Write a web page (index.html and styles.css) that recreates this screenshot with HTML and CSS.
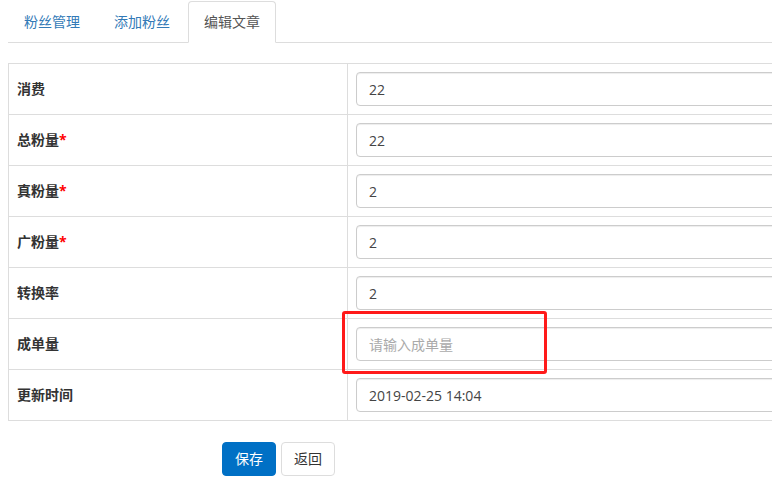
FILE: index.html
```html
<!DOCTYPE html>
<html lang="zh-CN">
<head>
<meta charset="utf-8">
<title>编辑文章</title>
<link rel="stylesheet" href="styles.css">
</head>
<body>
<div class="page">
  <ul class="tabs">
    <li class="tab"><a href="#">粉丝管理</a></li>
    <li class="tab"><a href="#">添加粉丝</a></li>
    <li class="tab active"><a href="#">编辑文章</a></li>
  </ul>
  <form class="form">
    <table class="grid">
      <colgroup><col class="col-label"><col class="col-field"></colgroup>
      <tbody>
        <tr><th>消费</th><td><input class="field" value="22"></td></tr>
        <tr><th>总粉量<span class="req">*</span></th><td><input class="field" value="22"></td></tr>
        <tr><th>真粉量<span class="req">*</span></th><td><input class="field" value="2"></td></tr>
        <tr><th>广粉量<span class="req">*</span></th><td><input class="field" value="2"></td></tr>
        <tr><th>转换率</th><td><input class="field" value="2"></td></tr>
        <tr><th>成单量</th><td><input class="field" placeholder="请输入成单量"></td></tr>
        <tr><th>更新时间</th><td><input class="field" value="2019-02-25 14:04"></td></tr>
      </tbody>
    </table>
    <div class="actions">
      <button type="button" class="btn btn-primary">保存</button>
      <button type="button" class="btn btn-default">返回</button>
    </div>
  </form>
  <div class="highlight"></div>
</div>
</body>
</html>
```

FILE: styles.css
```css
html, body {
  margin: 0;
  padding: 0;
  overflow: hidden;
  background: #fff;
}
body {
  font-family: "Open Sans", "Noto Sans CJK SC", "Microsoft YaHei", sans-serif;
  font-size: 14px;
  line-height: 20px;
  color: #333;
}
.page {
  position: relative;
  padding: 1px 0 0 8px;
  width: 1200px;
}
.tabs {
  list-style: none;
  margin: 0;
  padding: 0;
  display: flex;
  gap: 2px;
  border-bottom: 1px solid #ddd;
}
.tab {
  margin-bottom: -1px;
}
.tab a {
  display: block;
  padding: 10px 15px;
  line-height: 20px;
  border: 1px solid transparent;
  border-radius: 4px 4px 0 0;
  color: #337ab7;
  text-decoration: none;
}
.tab.active a {
  color: #555;
  background: #fff;
  border-color: #ddd #ddd transparent;
}
.form {
  margin-top: 20px;
}
.grid {
  border-collapse: collapse;
  table-layout: fixed;
  width: 1100px;
  border: 1px solid #ddd;
}
.col-label { width: 339px; }
.grid th, .grid td {
  border: 1px solid #ddd;
  padding: 8px;
  vertical-align: middle;
  text-align: left;
}
.grid th {
  font-weight: bold;
  color: #333;
}
.req {
  color: #f00;
}
.field {
  display: block;
  box-sizing: border-box;
  width: 100%;
  height: 34px;
  padding: 6px 12px;
  font-family: inherit;
  font-size: 14px;
  line-height: 20px;
  color: #444;
  background: #fff;
  border: 1px solid #ccc;
  border-radius: 4px;
  box-shadow: inset 0 1px 1px rgba(0,0,0,.075);
}
.field::placeholder {
  color: #aaa;
}
.actions {
  margin-top: 21px;
  padding-left: 214px;
  display: flex;
  gap: 5px;
}
.btn {
  font-family: inherit;
  font-size: 14px;
  line-height: 20px;
  padding: 6px 12px;
  border: 1px solid transparent;
  border-radius: 4px;
  cursor: pointer;
}
.btn-primary {
  background: #0070c5;
  border-color: #0070c5;
  color: #fff;
}
.btn-default {
  background: #fff;
  border-color: #ddd;
  color: #333;
}
.highlight {
  position: absolute;
  left: 342px;
  top: 311px;
  width: 199px;
  height: 57px;
  border: 3px solid #ff1a1a;
  border-radius: 3px;
  pointer-events: none;
}
```
